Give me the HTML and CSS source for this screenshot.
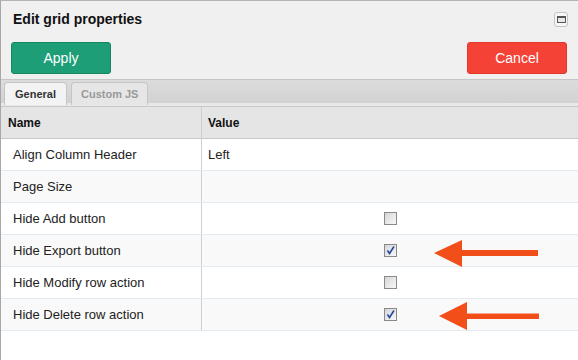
FILE: index.html
```html
<!DOCTYPE html>
<html lang="en">

<head>
    <meta charset="UTF-8">
    <meta name="viewport" content="width=device-width, initial-scale=1.0">
    <title>Edit grid properties</title>
    <link rel="stylesheet" href="styles.css">
</head>

<body>
    <div class="dialog">
        <div class="head">
            <div class="title-row">
                <h1>Edit grid properties</h1>
                <span class="max-btn"><span class="max-icon"></span></span>
            </div>
            <div class="actions">
                <button class="btn apply">Apply</button>
                <button class="btn cancel">Cancel</button>
            </div>
        </div>

        <div class="tabs">
            <span class="tab active">General</span>
            <span class="tab">Custom JS</span>
        </div>

        <div class="grid">
            <div class="row grid-head">
                <div class="cell">Name</div>
                <div class="cell">Value</div>
            </div>
            <div class="row">
                <div class="cell">Align Column Header</div>
                <div class="cell">Left</div>
            </div>
            <div class="row alt">
                <div class="cell">Page Size</div>
                <div class="cell"></div>
            </div>
            <div class="row">
                <div class="cell">Hide Add button</div>
                <div class="cell center"><span class="check"></span></div>
            </div>
            <div class="row alt">
                <div class="cell">Hide Export button</div>
                <div class="cell center"><span class="check on"><svg viewBox="0 0 11 11"><path d="M2.5 5.5 L4.5 8.5 L9 1.5" /></svg></span></div>
            </div>
            <div class="row">
                <div class="cell">Hide Modify row action</div>
                <div class="cell center"><span class="check"></span></div>
            </div>
            <div class="row alt">
                <div class="cell">Hide Delete row action</div>
                <div class="cell center"><span class="check on"><svg viewBox="0 0 11 11"><path d="M2.5 5.5 L4.5 8.5 L9 1.5" /></svg></span></div>
            </div>
        </div>

        <!-- annotation arrows drawn over the grid -->
        <svg class="marks" viewBox="0 0 578 360">
            <polygon points="434,253 462,240 462,250 538,250 538,256 462,256 462,267" />
            <polygon points="439,316 467,302 467,313.5 539,313.5 539,319 467,319 467,330" />
        </svg>
    </div>
</body>

</html>
```

FILE: styles.css
```css
* {
    box-sizing: border-box;
}

body {
    margin: 0;
    background: #fff;
    font-family: "Liberation Sans", Arial, sans-serif;
    color: #222;
}

.dialog {
    position: relative;
    height: 360px;
    border-top: 1px solid #b4b4b4;
    border-left: 1px solid #a8a8a8;
}

.head {
    background: #f0f0f0;
    padding: 0 11px 5px 10px;
}

.title-row {
    display: flex;
    align-items: center;
    justify-content: space-between;
    height: 36px;
}

h1 {
    margin: 0 0 0 2px;
    font-size: 14px;
    font-weight: bold;
    color: #111;
}

.max-btn {
    display: flex;
    align-items: center;
    justify-content: center;
    width: 14px;
    height: 15px;
    margin-right: -1px;
    border: 1px solid #c4c4c4;
    border-radius: 3px;
    background: #f6f6f6;
}

.max-icon {
    width: 9px;
    height: 7px;
    border: 1px solid #555;
    border-top-width: 2px;
    background: #e8e8e8;
}

.actions {
    display: flex;
    justify-content: space-between;
    margin-top: 5px;
}

.btn {
    width: 100px;
    height: 32px;
    border-radius: 3px;
    font-family: inherit;
    font-size: 14px;
    color: #fff;
    cursor: pointer;
}

.apply {
    background: #1d9e77;
    border: 1px solid #17865f;
}

.cancel {
    background: #f44336;
    border: 1px solid #e2372b;
}

.tabs {
    display: flex;
    gap: 4px;
    height: 28px;
    padding: 1px 0 0 3px;
    border-top: 1px solid #c6c6c6;
    border-bottom: 1px solid #c8c8c8;
    background: linear-gradient(#dcdcdc, #d2d2d2 88%, #e9e9e9 88%);
}

.tab {
    display: flex;
    align-items: center;
    justify-content: center;
    height: 23px;
    margin-top: 1px;
    padding: 0 9px;
    border: 1px solid #c6c6c6;
    border-bottom: none;
    border-radius: 4px 4px 0 0;
    background: #e6e6e6;
    font-size: 11px;
    font-weight: bold;
    color: #999;
}

.tab.active {
    width: 63px;
    background: #f3f3f3;
    color: #333;
}

.grid {
    background: #fff;
}

.row {
    display: grid;
    grid-template-columns: 200px 1fr;
    height: 32px;
    border-bottom: 1px solid #e2eaf2;
}

.row.alt {
    background: #f9f9f9;
}

.cell {
    display: flex;
    align-items: center;
    padding-left: 12px;
    font-size: 13px;
    color: #222;
}

.cell + .cell {
    padding-left: 6px;
    border-left: 1px solid #cfcfcf;
}

.cell.center {
    justify-content: center;
    padding-left: 0;
}

.grid-head {
    height: 32px;
    background: #e5e5e5;
    border-bottom: 1px solid #c8c8c8;
}

.grid-head .cell {
    padding-left: 7px;
    font-size: 12px;
    font-weight: bold;
    color: #111;
}

.grid-head .cell + .cell {
    padding-left: 6px;
}

.check {
    display: block;
    width: 13px;
    height: 13px;
    margin-left: 1px;
    border: 1px solid #8a8a8a;
    background: linear-gradient(135deg, #d6d6d6, #f8f8f8);
}

.check svg {
    display: block;
    width: 11px;
    height: 11px;
}

.check path {
    fill: none;
    stroke: #2a48a0;
    stroke-width: 1.6;
}

.marks {
    position: absolute;
    top: -1px;
    left: -1px;
    width: 578px;
    height: 360px;
    pointer-events: none;
}

.marks polygon {
    fill: #f24e1a;
}
```
